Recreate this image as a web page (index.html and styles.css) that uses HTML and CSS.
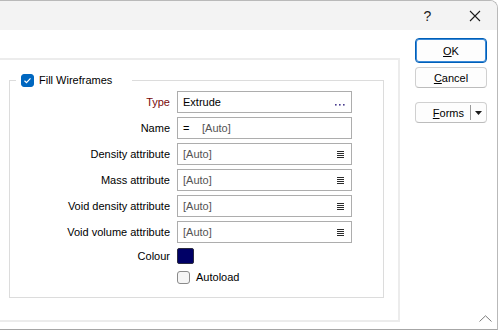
FILE: index.html
```html
<!DOCTYPE html>
<html lang="en">
<head>
    <meta charset="UTF-8">
    <title>Fill Wireframes</title>
    <link rel="stylesheet" href="styles.css">
</head>
<body>

<div class="window">
    <!-- Caption bar -->
    <div class="titlebar">
        <span class="caption-btn help">?</span>
        <span class="caption-btn close">
            <svg width="12" height="12" viewBox="0 0 12 12"><path d="M1 1L11 11M11 1L1 11" stroke="#1b1b1b" stroke-width="1.1" fill="none"/></svg>
        </span>
    </div>

    <div class="content">
        <div class="panel">
            <fieldset class="group">
                <legend>
                    <span class="check on">
                        <svg width="9" height="9" viewBox="0 0 9 9"><path d="M1.5 4.8L3.5 6.7L7.5 2.3" stroke="#fff" stroke-width="1.2" fill="none"/></svg>
                    </span>
                    Fill Wireframes
                </legend>

                <div class="form">
                    <label class="required">Type</label>
                    <div class="field">
                        <span class="value">Extrude</span>
                        <svg class="dots" width="10" height="2" viewBox="0 0 10 2"><rect x="0" y="0" width="1.6" height="1.6"/><rect x="4" y="0" width="1.6" height="1.6"/><rect x="8" y="0" width="1.6" height="1.6"/></svg>
                    </div>

                    <label>Name</label>
                    <div class="field">
                        <span class="value"><span class="eq">=</span><span class="auto">[Auto]</span></span>
                    </div>

                    <label>Density attribute</label>
                    <div class="field">
                        <span class="auto">[Auto]</span>
                        <svg class="list" width="7" height="7" viewBox="0 0 7 7"><path d="M0 0.5H7M0 2.5H7M0 4.5H7M0 6.5H7" stroke="#2b2b2b" stroke-width="1"/></svg>
                    </div>

                    <label>Mass attribute</label>
                    <div class="field">
                        <span class="auto">[Auto]</span>
                        <svg class="list" width="7" height="7" viewBox="0 0 7 7"><path d="M0 0.5H7M0 2.5H7M0 4.5H7M0 6.5H7" stroke="#2b2b2b" stroke-width="1"/></svg>
                    </div>

                    <label>Void density attribute</label>
                    <div class="field">
                        <span class="auto">[Auto]</span>
                        <svg class="list" width="7" height="7" viewBox="0 0 7 7"><path d="M0 0.5H7M0 2.5H7M0 4.5H7M0 6.5H7" stroke="#2b2b2b" stroke-width="1"/></svg>
                    </div>

                    <label>Void volume attribute</label>
                    <div class="field">
                        <span class="auto">[Auto]</span>
                        <svg class="list" width="7" height="7" viewBox="0 0 7 7"><path d="M0 0.5H7M0 2.5H7M0 4.5H7M0 6.5H7" stroke="#2b2b2b" stroke-width="1"/></svg>
                    </div>

                    <label class="short">Colour</label>
                    <div class="short"><span class="swatch"></span></div>

                    <span></span>
                    <div class="autoload"><span class="check"></span>Autoload</div>
                </div>
            </fieldset>
        </div>

        <!-- Dialog buttons -->
        <div class="side">
            <button class="btn default"><u>O</u>K</button>
            <button class="btn"><u>C</u>ancel</button>
            <button class="btn forms">
                <span class="forms-label"><u>F</u>orms</span>
                <span class="split"></span>
                <svg width="7" height="4" viewBox="0 0 7 4"><path d="M0 0H7L3.5 4Z" fill="#1b1b1b"/></svg>
            </button>
        </div>
    </div>

    <svg class="grip" width="13" height="7" viewBox="0 0 13 7"><path d="M0.5 6.5L6.5 0.8L12.5 6.5" stroke="#7a7a7a" stroke-width="1" fill="none"/></svg>
</div>

</body>
</html>
```

FILE: styles.css
```css
html, body {
    margin: 0;
    padding: 0;
    background: #ffffff;
}

body {
    font-family: "Liberation Sans", Arial, sans-serif;
    font-size: 11px;
    color: #000;
}

.window {
    position: relative;
    width: 498px;
    height: 330px;
    box-sizing: border-box;
    border-top: 1px solid #b9b9b9;
    border-right: 1px solid #b9b9b9;
    border-bottom: 1px solid #a6a6a6;
    border-top-right-radius: 8px;
    background: #fff;
    display: flex;
    flex-direction: column;
    overflow: hidden;
}

.titlebar {
    height: 29px;
    flex: none;
    background: #f3f3f3;
    display: flex;
    justify-content: flex-end;
}

.caption-btn {
    width: 45px;
    display: flex;
    align-items: center;
    justify-content: center;
}

.help {
    font-size: 14px;
    color: #1b1b1b;
    padding-top: 1px;
    padding-right: 2px;
}

.content {
    flex: 1;
    display: flex;
}

.panel {
    width: 398px;
    margin: 28px 0 7px 0;
    border-top: 2px solid #ececec;
    border-right: 2px solid #ececec;
    border-bottom: 2px solid #ececec;
}

.group {
    width: 375px;
    height: 226px;
    box-sizing: border-box;
    margin: 12px 0 0 9px;
    padding: 0;
    border: 1px solid #dcdcdc;
}

.group legend {
    width: 116px;
    box-sizing: border-box;
    margin-left: 6px;
    padding: 0 0 0 5px;
    height: 16px;
    display: flex;
    align-items: center;
    gap: 5px;
}

.check {
    width: 13px;
    height: 13px;
    box-sizing: border-box;
    border: 1px solid #8a8a8a;
    border-radius: 3px;
    background: #f5f5f5;
    display: inline-flex;
    align-items: center;
    justify-content: center;
    flex: none;
}

.check.on {
    background: #0067c0;
    border-color: #0067c0;
}

.form {
    margin-top: 3px;
    display: grid;
    grid-template-columns: 160px 175px;
    grid-auto-rows: 22px;
    column-gap: 7px;
    row-gap: 4px;
}

.form label {
    display: flex;
    align-items: center;
    justify-content: flex-end;
    padding-bottom: 1px;
}

.form label.required {
    color: #7a0a0a;
}

.field {
    box-sizing: border-box;
    border: 1px solid #adadad;
    background: #fff;
    display: flex;
    align-items: center;
    justify-content: space-between;
    padding: 0 6px 0 5px;
}

.eq {
    display: inline-block;
    width: 19px;
}

.auto {
    color: #545454;
}

.dots {
    fill: #4a3d8f;
    margin-top: 5px;
}

.list {
    margin-right: 1px;
}

.form .short {
    height: 18px;
}

.swatch {
    display: block;
    width: 17px;
    height: 16px;
    box-sizing: border-box;
    margin-top: 1px;
    background: #000066;
    border: 1px solid #2a2a40;
    border-radius: 2px;
}

.autoload {
    display: flex;
    align-items: center;
    gap: 6px;
    height: 16px;
    margin-top: -4px;
}

.side {
    flex: 1;
    display: flex;
    flex-direction: column;
    align-items: flex-start;
    padding: 8px 0 0 15px;
}

.btn {
    width: 72px;
    height: 21px;
    box-sizing: border-box;
    font-family: inherit;
    font-size: 11px;
    color: #000;
    background: #fdfdfd;
    border: 1px solid #d0d0d0;
    border-bottom-color: #bcbcbc;
    border-radius: 4px;
    padding: 0;
    margin-bottom: 4px;
}

.btn.default {
    height: 25px;
    border: 1px solid #005fb8;
    box-shadow: inset 0 0 0 1px #3b8ad8;
}

.btn.forms {
    margin-top: 10px;
    display: flex;
    align-items: center;
    padding: 0 4px 0 0;
}

.forms-label {
    flex: 1;
    text-align: right;
    padding-right: 6px;
}

.split {
    width: 1px;
    height: 15px;
    background: #9a9a9a;
    margin-right: 4px;
}

.grip {
    position: absolute;
    right: 5px;
    bottom: 7px;
}
```
